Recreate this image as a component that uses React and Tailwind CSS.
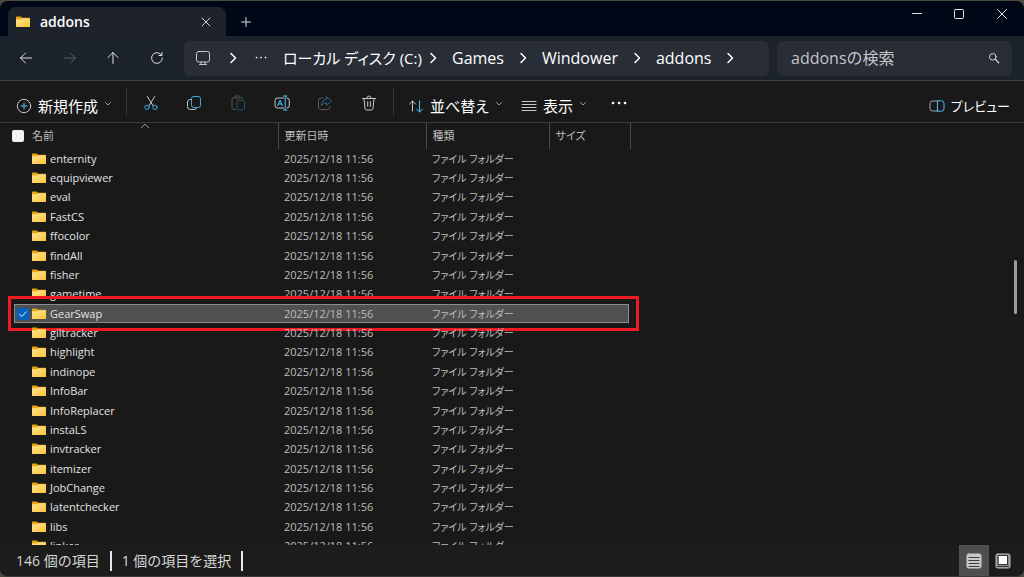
import clsx from 'clsx';

const FOLDERS = [
  'enternity',
  'equipviewer',
  'eval',
  'FastCS',
  'ffocolor',
  'findAll',
  'fisher',
  'gametime',
  'GearSwap',
  'giltracker',
  'highlight',
  'indinope',
  'InfoBar',
  'InfoReplacer',
  'instaLS',
  'invtracker',
  'itemizer',
  'JobChange',
  'latentchecker',
  'libs',
  'linker',
];

const SELECTED = 'GearSwap';

const Icon = ({ children, className = 'size-4' }) => (
  <svg
    viewBox="0 0 16 16"
    fill="none"
    stroke="currentColor"
    strokeWidth="1"
    strokeLinecap="round"
    strokeLinejoin="round"
    aria-hidden="true"
    className={clsx('shrink-0', className)}
  >
    {children}
  </svg>
);

const FolderIcon = () => (
  <svg viewBox="0 0 14 12" aria-hidden="true" className="h-3 w-3.5 shrink-0">
    <defs>
      <linearGradient id="folder" x1="0" y1="0" x2="1" y2="1">
        <stop offset="0" stopColor="#ffe394" />
        <stop offset="1" stopColor="#fcc636" />
      </linearGradient>
    </defs>
    <path d="M0 1.2Q0 .5.7.5H4.6L6 1.7H13.3Q14 1.7 14 2.4V6H0Z" fill="#e9a50f" />
    <path d="M0 3.2H4.8L6.2 2.2H14V10.4Q14 11 13.3 11H.7Q0 11 0 10.4Z" fill="url(#folder)" />
  </svg>
);

const ChevronRight = () => (
  <Icon className="size-4 text-white">
    <path d="M6 3.5 10.5 8 6 12.5" strokeWidth="1.5" />
  </Icon>
);

const ChevronDown = () => (
  <Icon className="mb-1 size-2 text-[#9a9a9a]">
    <path d="M3 5 8 10 13 5" strokeWidth="2" />
  </Icon>
);

const TabStrip = () => (
  <div className="flex h-[35px] shrink-0 items-end bg-[#000818] pl-2">
    <div className="flex h-[29px] w-[218px] items-center rounded-t-lg bg-[#1e222b] pl-2 pr-3">
      <FolderIcon />
      <span className="ml-2.5 flex-1 text-sm font-semibold text-white">addons</span>
      <button type="button" aria-label="タブを閉じる" className="text-[#d8d8d8]">
        <Icon className="size-4">
          <path d="M4 4 12 12M12 4 4 12" />
        </Icon>
      </button>
    </div>
    <button type="button" aria-label="新しいタブ" className="mb-1.5 ml-3 text-[#d8d8d8]">
      <Icon className="size-4">
        <path d="M8 3.5V12.5M3.5 8H12.5" />
      </Icon>
    </button>
    <div className="ml-auto flex h-full items-start pt-1 text-[#e4e4e4]">
      <button type="button" aria-label="最小化" className="grid w-[42px] place-items-center">
        <Icon>
          <path d="M3.5 8.5H12.5" />
        </Icon>
      </button>
      <button type="button" aria-label="最大化" className="grid w-[42px] place-items-center">
        <Icon>
          <rect x="3.5" y="4.5" width="9" height="9" rx="1" />
        </Icon>
      </button>
      <button type="button" aria-label="閉じる" className="grid w-[44px] place-items-center">
        <Icon>
          <path d="M3.5 4.5 12.5 13.5M12.5 4.5 3.5 13.5" />
        </Icon>
      </button>
    </div>
  </div>
);

const NavigationBar = () => (
  <div className="flex h-[45px] shrink-0 items-center border-b border-[#434343] bg-[#1c222c] pl-1 pr-3">
    <div className="mr-[5px] grid w-[175px] shrink-0 grid-cols-4 justify-items-center text-[#dedede]">
      <button type="button" aria-label="戻る">
        <Icon>
          <path d="M13.5 8H2.5M7.5 3 2.5 8 7.5 13" />
        </Icon>
      </button>
      <button type="button" aria-label="進む" disabled className="text-[#5b6068]">
        <Icon>
          <path d="M2.5 8H13.5M8.5 3 13.5 8 8.5 13" />
        </Icon>
      </button>
      <button type="button" aria-label="上へ">
        <Icon>
          <path d="M8 13.5V2.5M3 7.5 8 2.5 13 7.5" />
        </Icon>
      </button>
      <button type="button" aria-label="最新の情報に更新">
        <Icon>
          <path d="M12.6 5.2A5.4 5.4 0 1 0 13.4 8M12.9 2.5V5.5H9.9" />
        </Icon>
      </button>
    </div>

    <nav aria-label="パス" className="flex h-[35px] flex-1 items-center rounded-md bg-[#282d36] pl-[11px] text-base text-white">
      <button type="button" aria-label="PC" className="mr-3.5 text-[#c9c9c9]">
        <Icon>
          <rect x="1.5" y="1.5" width="13" height="10.5" rx="2" />
          <path d="M6 12V14.3M10 12V14.3M4.5 14.5H11.5" />
        </Icon>
      </button>
      <ChevronRight />
      <button type="button" aria-label="その他の階層" className="ml-3 mr-3.5">
        <Icon>
          <path d="M3.5 7.5H3.6M8 7.5H8.1M12.5 7.5H12.6" strokeWidth="1.7" />
        </Icon>
      </button>
      <button
        type="button"
        className="w-[142px] text-left text-[15px] whitespace-nowrap [font-feature-settings:'palt']"
      >
        ローカル ディスク (C:)
      </button>
      <ChevronRight />
      <button type="button" className="mx-[11px]">Games</button>
      <ChevronRight />
      <button type="button" className="mx-[11px]">Windower</button>
      <ChevronRight />
      <button type="button" className="mx-[11px]">addons</button>
      <ChevronRight />
    </nav>

    <label className="ml-2 flex h-[35px] w-[235px] shrink-0 items-center rounded-md bg-[#282d36] pl-3.5 pr-2.5">
      <input
        type="text"
        aria-label="addonsの検索"
        placeholder="addonsの検索"
        className="min-w-0 flex-1 bg-transparent text-base text-white outline-none placeholder:text-[#c4c6c9]"
      />
      <Icon className="size-4 text-[#d4d4d4]">
        <circle cx="6.8" cy="6.8" r="3.3" />
        <path d="M9.3 9.3 12.7 12.7" strokeWidth="1.3" />
      </Icon>
    </label>
  </div>
);

const Toolbar = () => (
  <div className="flex h-[42px] shrink-0 items-center border-b border-[#3b3b3b] pl-4 pr-3.5 text-white">
    <button type="button" className="flex w-[110px] items-center gap-1.5 pt-2 whitespace-nowrap">
      <Icon className="size-4 text-[#c8c8c8]">
        <circle cx="8" cy="8" r="6.7" />
        <path d="M8 5V11M5 8H11" stroke="#4cc2ff" />
      </Icon>
      <span className="text-[15px] leading-5">新規作成</span>
      <ChevronDown />
    </button>
    <span className="h-7 w-px bg-[#363636]" />

    <div className="mx-0.5 grid w-[262px] shrink-0 grid-cols-6 justify-items-center pt-0.5 text-[#c8c8c8]">
      <button type="button" aria-label="切り取り">
        <Icon>
          <path d="M4.3 1.5 10 10.8M11.7 1.5 6 10.8" />
          <circle cx="4" cy="12.3" r="2.2" stroke="#3ea6dc" />
          <circle cx="12" cy="12.3" r="2.2" stroke="#3ea6dc" />
        </Icon>
      </button>
      <button type="button" aria-label="コピー">
        <Icon>
          <path d="M5 4.5H3.5Q1.5 5 1.5 7V11.5Q1.5 14.5 4.5 14.5H8.5Q10.3 14.3 10.5 12.7" />
          <rect x="5.5" y="1.5" width="9" height="11" rx="2.2" stroke="#3ea6dc" />
        </Icon>
      </button>
      <button type="button" aria-label="貼り付け" disabled className="text-[#565656]">
        <Icon>
          <path d="M5.5 14.5H3.5Q2 14.5 2 13V4Q2 2.5 3.5 2.5H5M10 2.5H11.5Q12.7 2.7 12.8 4" />
          <rect x="5" y="1" width="5" height="2.5" rx="1.2" />
          <rect x="7" y="5.5" width="7.5" height="9.5" rx="1.5" stroke="#28536a" />
        </Icon>
      </button>
      <button type="button" aria-label="名前の変更">
        <Icon>
          <path d="M9.5 3H3.5Q1 3 1 5.5V10.5Q1 13 3.5 13H9.5M13 3Q15.3 3.2 15.3 5.5V10.5Q15.3 12.8 13 13" />
          <path d="M3.6 10.7 6 5.2 8.4 10.7M4.5 9H7.5" stroke="#4cc2ff" />
          <path d="M11.2 1.5V14.5M9.5 1H13M9.5 15H13" stroke="#4cc2ff" />
        </Icon>
      </button>
      <button type="button" aria-label="共有" disabled className="text-[#565656]">
        <Icon>
          <path d="M6 3H4Q1.5 3 1.5 5.5V12Q1.5 14.5 4 14.5H10.5Q13 14.5 13 12V11.5" />
          <path d="M9.5 1.8 14.5 6 9.5 10.2V7.8Q6.3 7.5 4.3 10.6 4.7 4.8 9.5 4.2Z" stroke="#2d6380" />
        </Icon>
      </button>
      <button type="button" aria-label="削除">
        <Icon>
          <path d="M1.5 3.5H14.5M5.7 3.3Q6 1 8 1 10 1 10.3 3.3M3 3.7 4 13.3Q4.2 15 5.7 15H10.3Q11.8 15 12 13.3L13 3.7M6.7 6.7V11.3M9.3 6.7V11.3" />
        </Icon>
      </button>
    </div>

    <span className="h-7 w-px bg-[#363636]" />
    <button type="button" className="ml-3.5 flex w-[113px] items-center gap-1.5 pt-2 whitespace-nowrap">
      <Icon className="size-4 text-[#c8c8c8]">
        <path d="M4.5 13V3M1.5 6 4.5 3 7.5 6" />
        <path d="M11.5 3V14M8.5 11 11.5 14 14.5 11" stroke="#4cc2ff" />
      </Icon>
      <span className="text-[15px] leading-5 [font-feature-settings:'palt']">並べ替え</span>
      <ChevronDown />
    </button>
    <button type="button" className="flex w-[90px] items-center gap-1.5 pt-2 whitespace-nowrap">
      <Icon className="size-4 text-[#c8c8c8]">
        <path d="M1 3.5H15M1 6.5H15M1 9.5H15M1 12.5H15" />
      </Icon>
      <span className="text-[15px] leading-5">表示</span>
      <ChevronDown />
    </button>
    <button type="button" aria-label="もっと見る" className="pt-0.5">
      <Icon>
        <path d="M2 8H2.1M8 8H8.1M14 8H14.1" strokeWidth="2.6" />
      </Icon>
    </button>

    <button type="button" className="ml-auto flex items-center gap-1.5 pt-2 whitespace-nowrap">
      <Icon className="size-4 text-[#a9a9a9]">
        <path d="M8.5 3H3.5Q1 3 1 5.5V10.5Q1 13 3.5 13H8.5" />
        <path d="M8.8 2.8H12.5Q15 2.8 15 5.3V10.7Q15 13.2 12.5 13.2H8.8Z" stroke="#4cc2ff" />
      </Icon>
      <span className="text-[13px] leading-5 [font-feature-settings:'palt']">プレビュー</span>
    </button>
  </div>
);

const FolderRow = ({ name, selected }) => (
  <tr className="relative z-0">
    <td className="p-0">
      {selected && (
        <>
          <span className="pointer-events-none absolute inset-x-0.5 inset-y-0 -z-10 border border-[#8c8c8c] bg-[#505050]" />
          <span className="pointer-events-none absolute -inset-y-2 -left-1 -right-2 border-3 border-[#ed1c24]" />
        </>
      )}
      <div className="flex items-center pl-1">
        <span className="mr-0.5 grid size-3.5 place-items-center">
          {selected && (
            <>
              <input
                type="checkbox"
                aria-label={name}
                defaultChecked
                className="col-start-1 row-start-1 size-3 appearance-none rounded-xs bg-[#0560c0]"
              />
              <Icon className="pointer-events-none col-start-1 row-start-1 size-3 text-white">
                <path d="M3.5 8.3 6.5 11.3 12.5 5" strokeWidth="1.2" />
              </Icon>
            </>
          )}
        </span>
        <FolderIcon />
        <span className="ml-1 whitespace-nowrap text-[#e2e2e2]">{name}</span>
      </div>
    </td>
    <td className="p-0 pl-1.5">2025/12/18 11:56</td>
    <td className="p-0 pl-1.5 text-[10px] leading-[18px] [font-feature-settings:'palt']">ファイル フォルダー</td>
    <td className="p-0" />
  </tr>
);

const FileList = () => (
  <div className="relative flex min-h-0 flex-1 items-start overflow-hidden pl-3 text-[11px] leading-[18px] text-[#bdbdbd]">
    <table className="h-[433px] w-[619px] table-fixed border-collapse">
      <thead>
        <tr className="h-[26px] text-left">
          <th className="w-[266px] border-r border-[#4a4a4a] p-0 font-normal">
            <label className="relative flex items-center gap-2">
              <input type="checkbox" className="size-3 appearance-none rounded-xs bg-[#f3f3f3]" />
              名前
              <Icon className="absolute -top-1.5 left-32 size-2.5 text-[#9a9a9a]">
                <path d="M2 11 8 5 14 11" strokeWidth="1.6" />
              </Icon>
            </label>
          </th>
          <th className="w-[148px] border-r border-[#4a4a4a] p-0 pl-1.5 font-normal">更新日時</th>
          <th className="w-[123px] border-r border-[#4a4a4a] p-0 pl-1.5 font-normal">種類</th>
          <th className="border-r border-[#4a4a4a] p-0 pl-1.5 font-normal [font-feature-settings:'palt']">サイズ</th>
        </tr>
      </thead>
      <tbody>
        {FOLDERS.map((name) => (
          <FolderRow key={name} name={name} selected={name === SELECTED} />
        ))}
      </tbody>
    </table>
    <div className="absolute top-[137px] right-[7px] h-[54px] w-[3px] rounded-full bg-[#9d9d9d]" />
  </div>
);

const StatusBar = () => (
  <div className="flex h-[31px] shrink-0 items-center bg-[#1c1c1c] pl-4 text-sm text-[#d6d6d6]">
    <span className="border-r-2 border-[#e8e8e8] pr-2.5 leading-5">146 個の項目</span>
    <span className="border-r-2 border-[#e8e8e8] px-2.5 leading-5">1 個の項目を選択</span>
    <div className="ml-auto flex h-full pr-2">
      <button type="button" aria-label="詳細" className="grid w-[30px] place-items-center bg-[#4f4f4f]">
        <Icon>
          <rect x="1" y="1" width="14" height="14" rx="1.5" fill="#c9c9c9" stroke="#c9c9c9" />
          <path d="M2.5 4.5H13.5M2.5 7.5H13.5M2.5 10.5H13.5M2.5 13.5H13.5" stroke="#3c3c3c" strokeLinecap="butt" />
        </Icon>
      </button>
      <button type="button" aria-label="大アイコン" className="grid w-[27px] place-items-center">
        <Icon>
          <rect x="1" y="1" width="14" height="14" rx="1.5" fill="#8c8c8c" stroke="#b9b9b9" />
          <rect x="3.5" y="2.5" width="9" height="9" fill="#fff" stroke="#333" />
          <path d="M2.5 13.5H13.5" stroke="#333" />
        </Icon>
      </button>
    </div>
  </div>
);

const App = () => (
  <div
    lang="ja"
    className="flex h-screen flex-col overflow-hidden bg-[#4a4a42] pt-px font-['Open_Sans','Noto_Sans_CJK_JP',sans-serif]"
  >
    <div className="flex min-h-0 flex-1 flex-col overflow-hidden rounded-lg border-b border-[#3a3a3a] bg-[#191919]">
      <TabStrip />
      <NavigationBar />
      <Toolbar />
      <FileList />
      <StatusBar />
    </div>
  </div>
);

export default App;
